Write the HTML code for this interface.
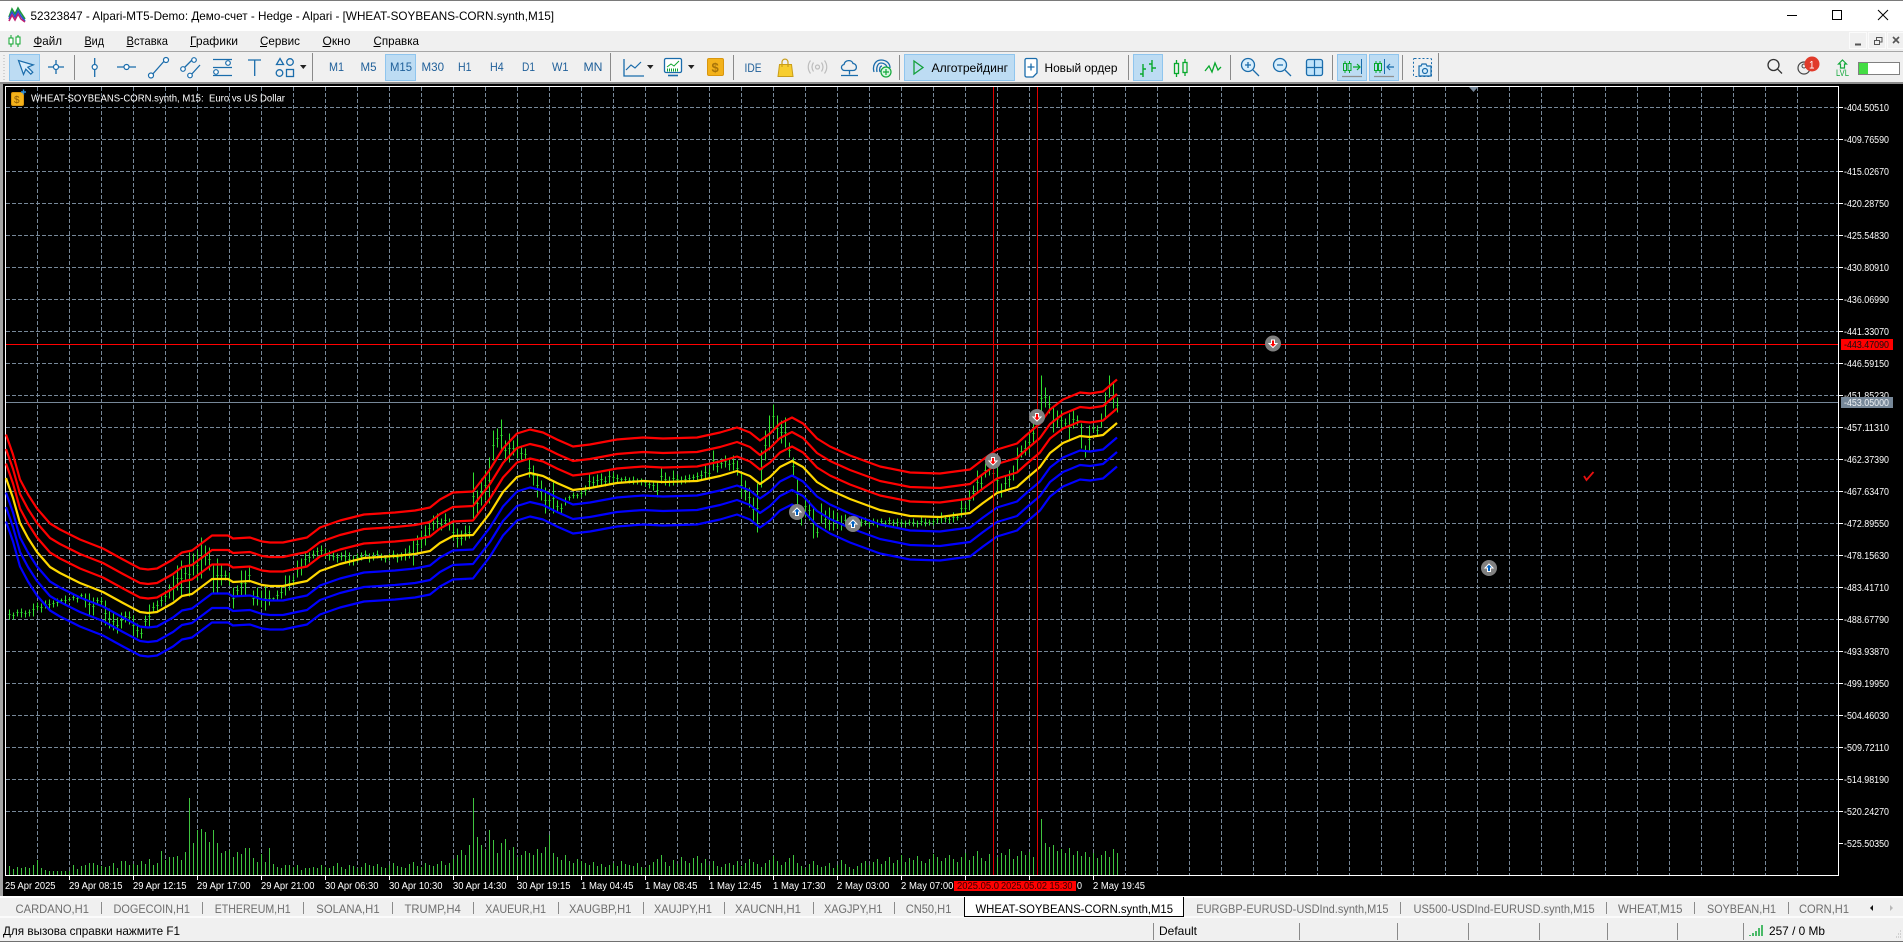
<!DOCTYPE html>
<html lang="ru">
<head>
<meta charset="utf-8">
<title>52323847 - Alpari-MT5-Demo</title>
<style>
html,body{margin:0;padding:0;background:#f0f0f0;overflow:hidden;width:1903px;height:942px}
svg{display:block}
text{font-family:"Liberation Sans","Noto Sans CJK SC",sans-serif;white-space:pre}
.m{font-size:12px;fill:#000}
.t{font-size:12px;fill:#1f5f99}
.tab{font-size:12px;fill:#6e6e6e}
.p{font-size:10px;fill:#fff}
.ic{fill:none;stroke:#1a6cab;stroke-width:1.3}
.cd{fill:#fff;stroke:#1a6cab;stroke-width:1.2}
.sep{stroke:#8a8a8a;stroke-width:1;shape-rendering:crispEdges}
.btn{fill:#bddcf3;stroke:#8fc5ee;stroke-width:1;shape-rendering:crispEdges}
.g{fill:none;stroke:#08a82c;stroke-width:1.3}
</style>
</head>
<body>
<svg xmlns="http://www.w3.org/2000/svg" width="1903" height="942" viewBox="0 0 1903 942">
<!-- title bar -->
<rect x="0" y="0" width="1903" height="31" fill="#fff"/>
<rect x="0" y="0" width="1903" height="1" fill="#7a7a7a"/>
<path d="M9 17l3-8 3 5 3-6 3 5 4 6" fill="none" stroke="#1f9a3a" stroke-width="1.6"/>
<path d="M9 19l3-7 3 5 3-6 3 5 4 5" fill="none" stroke="#2a4fd0" stroke-width="1.6"/>
<path d="M9 21l3-6 3 5 3-6 3 5 4 3" fill="none" stroke="#c02070" stroke-width="1.6"/>
<text x="30.5" y="20" class="m" textLength="523.5" lengthAdjust="spacingAndGlyphs">52323847 - Alpari-MT5-Demo: Демо-счет - Hedge - Alpari - [WHEAT-SOYBEANS-CORN.synth,M15]</text>
<path d="M1787 15.5h10" stroke="#000" shape-rendering="crispEdges"/>
<rect x="1832.5" y="10.5" width="9" height="9" fill="none" stroke="#000" shape-rendering="crispEdges"/>
<path d="M1878 10l10 10m0-10l-10 10" stroke="#000" fill="none"/>

<!-- menu bar -->
<rect x="0" y="31" width="1903" height="21" fill="#f0f0f0"/>
<path d="M11 35v12M18 35v12" stroke="#0da52c"/>
<rect x="9" y="38" width="4" height="6" fill="#fff" stroke="#0da52c"/>
<rect x="16" y="37" width="4" height="7" fill="#fff" stroke="#0da52c"/>
<text x="33.5" y="45" class="m" textLength="28.5" lengthAdjust="spacingAndGlyphs">Файл</text>
<text x="84.5" y="45" class="m" textLength="19.5" lengthAdjust="spacingAndGlyphs">Вид</text>
<text x="126.5" y="45" class="m" textLength="41.5" lengthAdjust="spacingAndGlyphs">Вставка</text>
<text x="190" y="45" class="m" textLength="48" lengthAdjust="spacingAndGlyphs">Графики</text>
<text x="260" y="45" class="m" textLength="40" lengthAdjust="spacingAndGlyphs">Сервис</text>
<text x="322.5" y="45" class="m" textLength="28" lengthAdjust="spacingAndGlyphs">Окно</text>
<text x="373.5" y="45" class="m" textLength="45.5" lengthAdjust="spacingAndGlyphs">Справка</text>
<path d="M33.5 46.5h8M84.5 46.5h7M126.5 46.5h7M190 46.5h6M260 46.5h7M322.5 46.5h8M373.5 46.5h7" stroke="#000" shape-rendering="crispEdges"/>
<!-- mdi buttons -->
<g fill="#f0f0f0" stroke="#fbfbfb" shape-rendering="crispEdges">
<rect x="1849.5" y="32.5" width="17" height="16"/><rect x="1868.5" y="32.5" width="17" height="16"/><rect x="1887.5" y="32.5" width="16" height="16"/>
</g>
<path d="M1855 44.5h6" stroke="#555" stroke-width="2"/>
<rect x="1874.5" y="40.5" width="5" height="4" fill="none" stroke="#555"/><path d="M1876.5 40v-2.500h5.500v4.500h-2" fill="none" stroke="#555"/>
<path d="M1893 37l6 6m0-6l-6 6" stroke="#555" stroke-width="1.6"/>

<!-- toolbar -->
<rect x="0" y="52" width="1903" height="31" fill="#f0f0f0"/>
<rect x="0" y="51" width="1903" height="1" fill="#a6a6a6"/>
<rect x="0" y="82" width="1903" height="2" fill="#8c8c8c"/>
<path d="M4 55v25" stroke="#b5b5b5" stroke-dasharray="1 2"/>
<rect x="9.500" y="54.500" width="30" height="26" class="btn"/>
<path d="M18.500 60.500l5 14 2.300-5.300 5 5 2-2-5-5 5.500-2.300z" fill="#d7ecfb" stroke="#1a6cab" stroke-width="1.2"/>
<path class="ic" d="M48 67h16M56 60v14"/><circle cx="56" cy="67" r="2.500" class="cd"/>
<path class="sep" d="M74.500 55v25"/>
<path class="ic" d="M94.700 58v19"/><circle cx="94.700" cy="67" r="2.500" class="cd"/>
<path class="ic" d="M117 67h19"/><circle cx="126.500" cy="67" r="2.500" class="cd"/>
<path class="ic" d="M151 76l15-17"/><circle cx="151" cy="75.500" r="2.500" class="cd"/><circle cx="166" cy="60" r="2.500" class="cd"/>
<path class="ic" d="M183 69l10-10M190 76l10-11"/><circle cx="183" cy="69" r="2.300" class="cd"/><circle cx="194" cy="60" r="2.300" class="cd"/><circle cx="190" cy="75.500" r="2.300" class="cd"/>
<path class="ic" d="M213 59.500h19M213 67.500h19M213 75.500h19"/><circle cx="228" cy="63" r="2.300" class="cd"/><circle cx="216" cy="72" r="2.300" class="cd"/>
<path class="ic" d="M248 60h13M254.700 60v16"/>
<path class="ic" d="M280 58.500l3.500 6h-7z"/><circle cx="290" cy="62" r="3.300" class="ic"/><circle cx="279.500" cy="73" r="3.300" class="ic"/><rect x="286.500" y="69.500" width="7" height="7" class="ic"/>
<path d="M300 65h6.500l-3.200 4z" fill="#222"/>
<path class="sep" d="M312.500 53v28"/>
<rect x="385.500" y="54.500" width="30" height="26" class="btn"/>
<text x="329" y="71" class="t" textLength="15" lengthAdjust="spacingAndGlyphs">M1</text>
<text x="360.500" y="71" class="t" textLength="16" lengthAdjust="spacingAndGlyphs">M5</text>
<text x="390" y="71" class="t" textLength="22" lengthAdjust="spacingAndGlyphs">M15</text>
<text x="421.500" y="71" class="t" textLength="22.500" lengthAdjust="spacingAndGlyphs">M30</text>
<text x="458" y="71" class="t" textLength="13.500" lengthAdjust="spacingAndGlyphs">H1</text>
<text x="490" y="71" class="t" textLength="13.700" lengthAdjust="spacingAndGlyphs">H4</text>
<text x="522" y="71" class="t" textLength="13" lengthAdjust="spacingAndGlyphs">D1</text>
<text x="552" y="71" class="t" textLength="16.500" lengthAdjust="spacingAndGlyphs">W1</text>
<text x="583.500" y="71" class="t" textLength="19" lengthAdjust="spacingAndGlyphs">MN</text>
<path class="sep" d="M610.500 53v28"/>
<path class="ic" d="M624 59v17h20"/><path d="M626 70l5-5 4 3 6-6" fill="none" stroke="#1a6cab" stroke-width="1.200"/>
<path d="M647 65h6.500l-3.200 4z" fill="#222"/>
<rect x="664.500" y="58.500" width="17" height="14" rx="1.500" fill="#fff" stroke="#1a6cab" stroke-width="1.300"/>
<path d="M667 67l4-3 3 2 5-5" fill="none" stroke="#0da52c"/><path d="M667 70h1m1 0h1m1 0h1m1 0h1m1 0h1m1 0h1" stroke="#0da52c" stroke-width="3" fill="none"/>
<path d="M668 75.500h10" stroke="#1a6cab" stroke-width="1.600"/>
<path d="M688 65h6.500l-3.200 4z" fill="#222"/>
<rect x="707.500" y="58.500" width="16" height="17" rx="1.500" fill="#f3b21b" stroke="#d9960e"/>
<text x="711.500" y="72" font-size="13" font-weight="bold" fill="#a8740a">$</text>
<path class="sep" d="M733.500 55v25"/>
<text x="744.500" y="72" font-size="12" fill="#1f5f99" textLength="17" lengthAdjust="spacingAndGlyphs">IDE</text>
<path d="M779.500 64.500h12l1.500 12h-15z" fill="#f7cd2e" stroke="#c99d1a"/><path d="M782 67v-4.500c0-4.500 6-4.500 6 0v4.500" fill="none" stroke="#c99d1a" stroke-width="1.200"/>
<g fill="none" stroke="#bdbdbd" stroke-width="1.200"><circle cx="817.500" cy="67" r="2"/><path d="M813.500 62.500c-2 3-2 6 0 9M821.500 62.500c2 3 2 6 0 9M810.500 60.500c-3 4-3 9 0 13M824.500 60.500c3 4 3 9 0 13"/></g>
<path class="ic" d="M845 70.500c-4 0-5-5-1-6 1-5 8-5 9-1 4 0 5 7 0 7zM849.500 70.500v4M841 75.500h17"/>
<g class="ic"><path d="M874 72c-2-7 2-12 7-12s9 3 9 8"/><path d="M877 72c-1-5 1-9 4-9s6 2 6 5"/><path d="M880 72c-1-3 0-6 2-6"/></g>
<circle cx="886" cy="72" r="5" fill="#d6f7e0" stroke="#12a83a" stroke-width="1.200"/><path d="M883 72h6M886 69v6" stroke="#12a83a" stroke-width="1.200"/>
<path class="sep" d="M899.500 55v25"/>
<rect x="904.500" y="54.500" width="110" height="26" class="btn"/>
<path d="M914 61l9 6.500-9 6.500z" fill="none" stroke="#12a03a" stroke-width="1.300"/>
<text x="931.500" y="72" class="m" textLength="76.500" lengthAdjust="spacingAndGlyphs">Алготрейдинг</text>
<path d="M1026.500 58.500h9a1.500 1.500 0 0 1 1.500 1.500v13l-4 4h-6.500a1.500 1.500 0 0 1-1.500-1.500v-15.500a1.500 1.500 0 0 1 1.500-1.500z" fill="#fff" stroke="#1a6cab" stroke-width="1.300"/><path d="M1027.500 67h7M1031 63.500v7" stroke="#1a6cab" stroke-width="1.300"/>
<text x="1044.500" y="72" class="m" textLength="73" lengthAdjust="spacingAndGlyphs">Новый ордер</text>
<path class="sep" d="M1128.500 55v25"/>
<rect x="1133.500" y="54.500" width="29" height="26" class="btn"/>
<path d="M1143 64v13M1140 74h3M1143 69h3M1152 60v12M1149 64h3M1152 68h4" stroke="#08a82c" stroke-width="1.400" fill="none"/>
<path class="g" d="M1176.500 60v17M1185 59v17"/><rect x="1174.500" y="63.500" width="4" height="10" fill="#f0f0f0" stroke="#08a82c" stroke-width="1.300"/><rect x="1183" y="62.500" width="4" height="10" fill="#f0f0f0" stroke="#08a82c" stroke-width="1.300"/>
<path class="g" d="M1205 71l4-5 3 6 3-9 3 7 3-3"/>
<path class="sep" d="M1230.500 55v25"/>
<circle cx="1248" cy="65" r="6.500" fill="#d8eefc" stroke="#1a6cab" stroke-width="1.300"/><path d="M1245 65h6M1248 62v6M1253 70l6 6" stroke="#1a6cab" stroke-width="1.300"/>
<circle cx="1280" cy="65" r="6.500" fill="#d8eefc" stroke="#1a6cab" stroke-width="1.300"/><path d="M1277 65h6M1285 70l6 6" stroke="#1a6cab" stroke-width="1.300"/>
<rect x="1306.500" y="59.500" width="16" height="16" rx="2" fill="#bfe3fa" stroke="#1a6cab" stroke-width="1.300"/><path d="M1314.500 60v15M1307 67.500h15" stroke="#1a6cab" stroke-width="1.200"/>
<path class="sep" d="M1332.500 55v25"/>
<rect x="1337.500" y="54.500" width="29" height="26" class="btn"/>
<rect x="1369.500" y="54.500" width="29" height="26" class="btn"/>
<path d="M1342 76.500h20M1374 76.500h20" stroke="#909090" stroke-width="1.300"/>
<path d="M1345 61v12M1349.500 61v12" stroke="#08a82c"/><rect x="1343.500" y="63.500" width="3" height="7" fill="#bddcf3" stroke="#08a82c"/><rect x="1348" y="63.500" width="3" height="7" fill="#bddcf3" stroke="#08a82c"/>
<path d="M1353 67h7M1357 64l3 3-3 3" fill="none" stroke="#08a82c" stroke-width="1.200"/><path d="M1361.500 59v15" stroke="#1a6cab"/>
<path d="M1376 61v12M1380 61v12" stroke="#08a82c"/><rect x="1374.500" y="63.500" width="3" height="7" fill="#bddcf3" stroke="#08a82c"/><rect x="1378.500" y="63.500" width="3" height="7" fill="#bddcf3" stroke="#08a82c"/>
<path d="M1384.500 59v15" stroke="#1a6cab"/><path d="M1394 67h-7M1390 64l-3 3 3 3" fill="none" stroke="#1a6cab" stroke-width="1.200"/>
<path class="sep" d="M1402.500 55v25"/>
<rect x="1413.500" y="58.500" width="18" height="18" fill="none" stroke="#1a6cab" stroke-dasharray="2 2" rx="1"/>
<path d="M1419 66h2l1-2h4l1 2h4v10h-12z" fill="#d8eefc" stroke="#1a6cab" stroke-width="1.200"/><circle cx="1425" cy="71" r="2.500" fill="none" stroke="#1a6cab" stroke-width="1.200"/>
<path class="sep" d="M1438.500 53v28"/>
<circle cx="1773.500" cy="65" r="5.500" fill="none" stroke="#333" stroke-width="1.300"/><path d="M1777.500 69l4.500 4.500" stroke="#333" stroke-width="1.300"/>
<circle cx="1804" cy="68" r="6" fill="none" stroke="#444" stroke-width="1.200"/><circle cx="1804" cy="66" r="2" fill="none" stroke="#444"/>
<circle cx="1812" cy="64" r="7.500" fill="#e13b2b"/>
<text x="1809" y="68.500" font-size="11" fill="#fff" textLength="5.500" lengthAdjust="spacingAndGlyphs">1</text>
<path d="M1842.500 60l4 4h-2v4h-4v-4h-2z" fill="none" stroke="#12a83a" stroke-width="1.200"/>
<text x="1836" y="76" font-size="9" fill="#12a83a" textLength="13" lengthAdjust="spacingAndGlyphs">LVL</text>
<rect x="1858.500" y="62.500" width="41" height="12" fill="#fff" stroke="#808080" shape-rendering="crispEdges"/>
<rect x="1859" y="63" width="9" height="11" fill="#44dd44"/>

<!-- chart background -->
<rect x="0" y="84" width="1903" height="813" fill="#000"/>
<rect x="0" y="84" width="3" height="813" fill="#a4a4a4"/>
<!-- grid -->
<path fill="none" stroke="#778899" stroke-dasharray="4 2" shape-rendering="crispEdges" d="M37.500 87v788m32-788v788m32-788v788m32-788v788m32-788v788m32-788v788m32-788v788m32-788v788m32-788v788m32-788v788m32-788v788m32-788v788m32-788v788m32-788v788m32-788v788m32-788v788m32-788v788m32-788v788m32-788v788m32-788v788m32-788v788m32-788v788m32-788v788m32-788v788m32-788v788m32-788v788m32-788v788m32-788v788m32-788v788m32-788v788m32-788v788m32-788v788m32-788v788m32-788v788m32-788v788m32-788v788m32-788v788m32-788v788m32-788v788m32-788v788m32-788v788m32-788v788m32-788v788m32-788v788m32-788v788m32-788v788m32-788v788m32-788v788m32-788v788m32-788v788m32-788v788m32-788v788m32-788v788m32-788v788m32-788v788m32-788v788"/>
<path fill="none" stroke="#778899" stroke-dasharray="4 2" shape-rendering="crispEdges" d="M6 107.500h1832m-1832 32h1832m-1832 32h1832m-1832 32h1832m-1832 32h1832m-1832 32h1832m-1832 32h1832m-1832 32h1832m-1832 32h1832m-1832 32h1832m-1832 32h1832m-1832 32h1832m-1832 32h1832m-1832 32h1832m-1832 32h1832m-1832 32h1832m-1832 32h1832m-1832 32h1832m-1832 32h1832m-1832 32h1832m-1832 32h1832m-1832 32h1832m-1832 32h1832"/>
<!-- frame -->
<rect x="5.500" y="86.500" width="1833" height="789" fill="none" stroke="#fff" shape-rendering="crispEdges"/>
<path d="M1469 87h9l-4.500 5z" fill="#778899"/>
<!-- price lines -->
<path d="M6 344.500h1832" stroke="#ff0000" shape-rendering="crispEdges"/>
<path d="M6 402.500h1832" stroke="#778899" shape-rendering="crispEdges"/>
<!-- volumes -->
<path fill="none" stroke="#3fc43f" shape-rendering="crispEdges" transform="translate(.5 0)" d="M9 875v-9m4 9v-6m4 6v-8m4 8v-7m4 7v-8m4 8v-7m4 7v-10m4 10v-15m4 15v-7m4 7v-5m4 5v-4m4 4v-4m4 4v-4m4 4v-4m4 4v-4m4 4v-4m4 4v-10m4 10v-6m4 6v-9m4 9v-10m4 10v-12m4 12v-12m4 12v-10m4 10v-9m4 9v-8m4 8v-9m4 9v-12m4 12v-7m4 7v-14m4 14v-14m4 14v-10m4 10v-11m4 11v-10m4 10v-14m4 14v-11m4 11v-16m4 16v-10m4 10v-12m4 12v-24m4 24v-15m4 15v-18m4 18v-18m4 18v-19m4 19v-15m4 15v-23m4 23v-77m4 77v-32m4 32v-45m4 45v-46m4 46v-43m4 43v-33m4 33v-45m4 45v-32m4 32v-22m4 22v-24m4 24v-25m4 25v-18m4 18v-23m4 23v-21m4 21v-27m4 27v-27m4 27v-17m4 17v-13m4 13v-21m4 21v-13m4 13v-27m4 27v-11m4 11v-8m4 8v-7m4 7v-10m4 10v-10m4 10v-8m4 8v-10m4 10v-5m4 5v-7m4 7v-7m4 7v-8m4 8v-7
m4 7v-10m4 10v-8m4 8v-7m4 7v-9m4 9v-12m4 12v-8m4 8v-6m4 6v-10m4 10v-9m4 9v-7m4 7v-8m4 8v-12m4 12v-10m4 10v-9m4 9v-11m4 11v-8m4 8v-7m4 7v-10m4 10v-12m4 12v-9m4 9v-8m4 8v-7m4 7v-11m4 11v-13m4 13v-9m4 9v-8m4 8v-12m4 12v-10m4 10v-9m4 9v-11m4 11v-14m4 14v-10m4 10v-12m4 12v-16m4 16v-20
m4 20v-25m4 25v-20m4 20v-30m4 30v-77m4 77v-38m4 38v-30m4 30v-25m4 25v-45m4 45v-35m4 35v-22m4 22v-32m4 32v-36m4 36v-25m4 25v-28m4 28v-18m4 18v-20m4 20v-24m4 24v-22m4 22v-20m4 20v-26m4 26v-22m4 22v-28m4 28v-40m4 40v-22m4 22v-18m4 18v-15m4 15v-20m4 20v-14m4 14v-12m4 12v-16m4 16v-14
m4 14v-12m4 12v-10m4 10v-13m4 13v-9m4 9v-11m4 11v-8m4 8v-10m4 10v-12m4 12v-9m4 9v-14m4 14v-11m4 11v-10m4 10v-9m4 9v-12m4 12v-8m4 8v-7m4 7v-10m4 10v-13
m4 13v-16m4 16v-20m4 20v-13m4 13v-9m4 9v-15m4 15v-11m4 11v-18m4 18v-14m4 14v-12m4 12v-17m4 17v-19m4 19v-12m4 12v-16m4 16v-10m4 10v-14m4 14v-9m4 9v-8m4 8v-11m4 11v-12
m4 12v-10m4 10v-14m4 14v-9m4 9v-12m4 12v-16m4 16v-13m4 13v-11m4 11v-8m4 8v-12m4 12v-15m4 15v-19m4 19v-14m4 14v-10m4 10v-13m4 13v-17m4 17v-20m4 20v-12m4 12v-9m4 9v-7m4 7v-11
m4 11v-14m4 14v-10m4 10v-8m4 8v-9m4 9v-12m4 12v-7m4 7v-10m4 10v-15m4 15v-11m4 11v-8m4 8v-6m4 6v-9m4 9v-12m4 12v-14m4 14v-10m4 10v-13m4 13v-16m4 16v-11m4 11v-14m4 14v-18m4 18v-12m4 12v-15m4 15v-20m4 20v-13m4 13v-17m4 17v-15m4 15v-19m4 19v-14m4 14v-12m4 12v-16m4 16v-21m4 21v-18
m4 18v-14m4 14v-17m4 17v-20m4 20v-16m4 16v-13m4 13v-18m4 18v-22m4 22v-15m4 15v-19m4 19v-24m4 24v-17m4 17v-14m4 14v-21m4 21v-25m4 25v-18m4 18v-22m4 22v-20m4 20v-26m4 26v-16m4 16v-19m4 19v-24
m4 24v-20m4 20v-23m4 23v-18m4 18v-25m4 25v-56m4 56v-32m4 32v-28m4 28v-30m4 30v-24m4 24v-26m4 26v-22m4 22v-27m4 27v-20m4 20v-24m4 24v-19m4 19v-23m4 23v-18m4 18v-22m4 22v-17m4 17v-20m4 20v-24m4 24v-18m4 18v-26m4 26v-22"/>
<!-- bars -->
<path fill="none" stroke="#2fe02f" shape-rendering="crispEdges" transform="translate(.5 .5)" d="M9 609v10m-1-5h2M13 612v7m-1-4h2M17 609v7m-1-4h2M21 608v9m-1-5h2M25 610v7m-1-4h2M29 609v7m-1-4h2M33 603v13m-1-7h2M37 602v8m-1-4h2M41 603v9m-1-5h2M45 600v8m-1-4h2M49 599v10m-1-5h2M53 600v7m-1-4h2M57 598v8m-1-4h2M61 598v5m-1-3h2M65 595v10m-1-5h2M69 597v4m-1-2h2M73 595v5m-1-3h2M77 595v7m-1-4h2M81 593v5m-1-3h2M85 593v14m-1-7h2M89 593v22m-1-11h2M93 597v18m-1-9h2M97 597v7m-1-4h2M101 597v8m-1-4h2M105 600v25m-1-12h2M109 608v20m-1-10h2M113 612v18m-1-9h2M117 617v16m-1-8h2M121 612v16m-1-8h2M125 611v11m-1-6h2M129 611v13m-1-7h2M133 615v20m-1-10h2M137 623v14m-1-7h2M141 628v10m-1-5h2M145 615v12m-1-6h2M149 604v23m-1-11h2M153 602v10m-1-5h2M157 600v10m-1-5h2M161 595v11m-1-6h2M165 590v12m-1-6h2M169 584v14m-1-7h2M173 575v25m-1-12h2M177 565v25m-1-12h2M181 560v35m-1-17h2M185 565v15m-1-7h2M189 552v44m-1-22h2M193 553v22m-1-11h2M197 550v30m-1-15h2M201 537v41m-1-20h2M205 545v20m-1-10h2M209 547v23m-1-11h2M213 563v29m-1-14h2M217 558v34m-1-17h2M221 565v20m-1-10h2M225 570v10m-1-5h2M229 572v13m-1-6h2M233 587v21m-1-10h2M237 585v10m-1-5h2M241 570v25m-1-12h2M245 570v25m-1-12h2M249 567v15m-1-7h2M253 590v15m-1-7h2M257 587v18m-1-9h2M261 590v17m-1-8h2M265 585v25m-1-12h2M269 590v15m-1-7h2M273 597v3m-1-2h2M277 590v10m-1-5h2M281 585v13m-1-6h2M285 575v20m-1-10h2M289 575v15m-1-7h2M293 575v10m-1-5h2M297 560v17m-1-8h2M301 558v17m-1-8h2M305 552v13m-1-6h2M309 552v10m-1-5h2M313 550v8m-1-4h2M317 547v9m-1-5h2M321 545v10m-1-5h2M325 548v10m-1-5h2M329 550v10m-1-5h2M333 552v8m-1-4h2M337 553v9m-1-5h2M341 552v8m-1-4h2M345 550v12m-1-6h2M349 552v13m-1-6h2M353 555v10m-1-5h2M357 553v9m-1-5h2M361 552v8m-1-4h2M365 550v8m-1-4h2M369 553v9m-1-5h2M373 552v8m-1-4h2M377 550v8m-1-4h2M381 553v7m-1-4h2M385 555v7m-1-4h2M389 553v7m-1-4h2M393 550v8m-1-4h2M397 553v9m-1-5h2M401 552v8m-1-4h2M405 548v12m-1-6h2M409 545v13m-1-6h2M413 540v25m-1-12h2M417 535v17m-1-8h2M421 530v18m-1-9h2M425 525v20m-1-10h2M429 520v15m-1-7h2M433 515v15m-1-7h2M437 513v15m-1-7h2M441 518v12m-1-6h2M445 513v13m-1-6h2M449 518v12m-1-6h2M453 523v17m-1-8h2M457 528v19m-1-9h2M461 530v15m-1-7h2M465 525v15m-1-7h2M469 525v13m-1-6h2M473 472v48m-1-24h2M477 490v25m-1-12h2M481 478v27m-1-13h2M485 470v30m-1-15h2M489 457v46m-1-23h2M493 430v30m-1-15h2M497 428v19m-1-9h2M501 419v31m-1-15h2M505 440v20m-1-10h2M509 433v29m-1-14h2M513 440v15m-1-7h2M517 438v20m-1-10h2M521 445v15m-1-7h2M525 448v12m-1-6h2M529 458v19m-1-9h2M533 465v20m-1-10h2M537 473v24m-1-12h2M541 480v20m-1-10h2M545 487v26m-1-13h2M549 490v20m-1-10h2M553 482v31m-1-15h2M557 500v12m-1-6h2M561 503v10m-1-5h2M565 497v8m-1-4h2M569 495v5m-1-3h2M573 492v6m-1-3h2M577 493v5m-1-3h2M581 490v7m-1-4h2M585 485v10m-1-5h2M589 472v18m-1-9h2M593 476v12m-1-6h2M597 474v12m-1-6h2M601 473v12m-1-6h2M605 476v10m-1-5h2M609 469v14m-1-7h2M613 472v10m-1-5h2M617 474v8m-1-4h2M621 477v5m-1-3h2M625 476v6m-1-3h2M629 477v6m-1-3h2M633 476v8m-1-4h2M637 478v6m-1-3h2M641 478v7m-1-4h2M645 479v7m-1-4h2M649 480v8m-1-4h2M653 481v9m-1-5h2M657 482v15m-1-7h2M661 468v15m-1-7h2M665 472v13m-1-6h2M669 476v10m-1-5h2M673 470v15m-1-7h2M677 474v10m-1-5h2M681 476v8m-1-4h2M685 475v8m-1-4h2M689 474v8m-1-4h2M693 474v6m-1-3h2M697 472v8m-1-4h2M701 470v10m-1-5h2M705 465v13m-1-6h2M709 468v10m-1-5h2M713 450v20m-1-10h2M717 460v12m-1-6h2M721 458v10m-1-5h2M725 455v12m-1-6h2M729 458v12m-1-6h2M733 455v15m-1-7h2M737 460v15m-1-7h2M741 473v24m-1-12h2M745 480v20m-1-10h2M749 487v20m-1-10h2M753 497v23m-1-11h2M757 483v49m-1-24h2M761 450v37m-1-18h2M765 430v30m-1-15h2M769 415v35m-1-17h2M773 404v24m-1-12h2M777 415v25m-1-12h2M781 420v23m-1-11h2M785 417v30m-1-15h2M789 442v15m-1-7h2M793 457v18m-1-9h2M797 478v32m-1-16h2M801 505v20m-1-10h2M805 495v22m-1-11h2M809 500v20m-1-10h2M813 507v31m-1-15h2M817 527v10m-1-5h2M821 503v20m-1-10h2M825 510v18m-1-9h2M829 507v23m-1-11h2M833 510v20m-1-10h2M837 512v16m-1-8h2M841 515v15m-1-7h2M845 514v12m-1-6h2M849 516v14m-1-7h2M853 516v12m-1-6h2M857 518v12m-1-6h2M861 518v8m-1-4h2M865 517v8m-1-4h2M869 519v8m-1-4h2M873 518v7m-1-4h2M877 519v8m-1-4h2M881 518v7m-1-4h2M885 520v7m-1-4h2M889 517v7m-1-4h2M893 519v7m-1-4h2M897 518v8m-1-4h2M901 519v7m-1-4h2M905 520v7m-1-4h2M909 519v6m-1-3h2M913 518v8m-1-4h2M917 520v7m-1-4h2M921 517v8m-1-4h2M925 518v8m-1-4h2M929 519v6m-1-3h2M933 518v7m-1-4h2M937 516v7m-1-4h2M941 512v11m-1-6h2M945 515v7m-1-4h2M949 516v7m-1-4h2M953 512v10m-1-5h2M957 514v6m-1-3h2M961 498v19m-1-9h2M965 503v10m-1-5h2M969 490v20m-1-10h2M973 485v15m-1-7h2M977 470v23m-1-11h2M981 475v15m-1-7h2M985 463v14m-1-7h2M989 463v12m-1-6h2M993 465v15m-1-7h2M997 467v26m-1-13h2M1001 483v14m-1-7h2M1005 475v15m-1-7h2M1009 470v17m-1-8h2M1013 465v15m-1-7h2M1017 447v23m-1-11h2M1021 445v12m-1-6h2M1025 440v15m-1-7h2M1029 430v23m-1-11h2M1033 423v20m-1-10h2M1037 410v15m-1-7h2M1041 375v45m-1-22h2M1045 387v20m-1-10h2M1049 395v18m-1-9h2M1053 407v25m-1-12h2M1057 410v17m-1-8h2M1061 410v20m-1-10h2M1065 418v10m-1-5h2M1069 413v27m-1-13h2M1073 410v18m-1-9h2M1077 415v10m-1-5h2M1081 423v25m-1-12h2M1085 445v12m-1-6h2M1089 425v27m-1-13h2M1093 425v7m-1-4h2M1097 425v10m-1-5h2M1101 413v14m-1-7h2M1105 392v26m-1-13h2M1109 375v22m-1-11h2M1113 383v25m-1-12h2M1117 397v15m-1-7h2"/>
<!-- envelope lines -->
<g fill="none" stroke-width="2.200" stroke-linejoin="round">
<path id="c" d="M6 478L13 498 20 523 28 538 37 552 50 567 60 573 80 583 103 592 123 603 140 612 148 613 157 612 173 603 182 596 192 594 200 588 212 579 220 579 228 579 233 582 250 581 262 585 270 586 283 586 297 583 307 581 320 571 340 564 364 558 395 556 415 554 430 551 440 543 453 536 473 535 490 513 503 492 517 477 530 473 543 476 557 483 573 490 590 488 617 483 643 481 663 482 697 481 720 476 737 471 750 476 760 484 770 477 780 467 792 461 803 467 817 482 830 490 850 499 880 510 910 516 940 517 970 513 983 503 997 493 1017 487 1027 478 1040 467 1050 453 1063 443 1080 436 1090 437 1103 435 1117 423"/>
<use href="#c" stroke="#ffd800"/>
<use href="#c" stroke="#ff0000" transform="translate(0 -14.500)"/>
<use href="#c" stroke="#ff0000" transform="translate(0 -29)"/>
<use href="#c" stroke="#ff0000" transform="translate(0 -43.500)"/>
<use href="#c" stroke="#0000ff" transform="translate(0 14.500)"/>
<use href="#c" stroke="#0000ff" transform="translate(0 29)"/>
<use href="#c" stroke="#0000ff" transform="translate(0 43.500)"/>
</g>
<!-- red verticals -->
<path d="M993.500 87v788M1037.500 87v788" stroke="#e00000" shape-rendering="crispEdges"/>
<!-- markers -->
<g transform="translate(993 461)"><circle r="8" fill="#808080"/><path d="M-1.500-3.500H1.500V0H4L0 4-4 0H-1.500z" fill="#f00" stroke="#fff"/></g>
<g transform="translate(1037 417)"><circle r="8" fill="#808080"/><path d="M-1.500-3.500H1.500V0H4L0 4-4 0H-1.500z" fill="#f00" stroke="#fff"/></g>
<g transform="translate(1273 343.500)"><circle r="8" fill="#808080"/><path d="M-1.500-3.500H1.500V0H4L0 4-4 0H-1.500z" fill="#f00" stroke="#fff"/></g>
<g transform="translate(797 512)"><circle r="8" fill="#808080"/><path d="M-1.500 3.500H1.500V0H4L0-4-4 0H-1.500z" fill="#0060c0" stroke="#fff"/></g>
<g transform="translate(853 524)"><circle r="8" fill="#808080"/><path d="M-1.500 3.500H1.500V0H4L0-4-4 0H-1.500z" fill="#0060c0" stroke="#fff"/></g>
<g transform="translate(1489 568)"><circle r="8" fill="#808080"/><path d="M-1.500 3.500H1.500V0H4L0-4-4 0H-1.500z" fill="#0060c0" stroke="#fff"/></g>
<path d="M1584 476l2.500 4 7-8" fill="none" stroke="#e81010" stroke-width="1.800"/>
<!-- chart label -->
<rect x="11.500" y="92.500" width="12" height="13" rx="1.500" fill="#f3b21b" stroke="#d9960e"/>
<text x="14" y="103" font-size="10" fill="#8a5a05">$</text>
<path d="M21 92h5M23.500 89.500v5" stroke="#2a8ad8" stroke-width="1.400"/>
<text x="31" y="101.500" font-size="10" fill="#fff" textLength="254" lengthAdjust="spacingAndGlyphs">WHEAT-SOYBEANS-CORN.synth, M15:  Euro vs US Dollar</text>
<!-- price scale -->
<path stroke="#fff" shape-rendering="crispEdges" d="M1839 107.500h4M1839 139.500h4M1839 171.500h4M1839 203.500h4M1839 235.500h4M1839 267.500h4M1839 299.500h4M1839 331.500h4M1839 363.500h4M1839 395.500h4M1839 427.500h4M1839 459.500h4M1839 491.500h4M1839 523.500h4M1839 555.500h4M1839 587.500h4M1839 619.500h4M1839 651.500h4M1839 683.500h4M1839 715.500h4M1839 747.500h4M1839 779.500h4M1839 811.500h4M1839 843.500h4"/>
<g class="p">
<text x="1844" y="111" class="p" textLength="45" lengthAdjust="spacingAndGlyphs">-404.50510</text>
<text x="1844" y="143" class="p" textLength="45" lengthAdjust="spacingAndGlyphs">-409.76590</text>
<text x="1844" y="175" class="p" textLength="45" lengthAdjust="spacingAndGlyphs">-415.02670</text>
<text x="1844" y="207" class="p" textLength="45" lengthAdjust="spacingAndGlyphs">-420.28750</text>
<text x="1844" y="239" class="p" textLength="45" lengthAdjust="spacingAndGlyphs">-425.54830</text>
<text x="1844" y="271" class="p" textLength="45" lengthAdjust="spacingAndGlyphs">-430.80910</text>
<text x="1844" y="303" class="p" textLength="45" lengthAdjust="spacingAndGlyphs">-436.06990</text>
<text x="1844" y="335" class="p" textLength="45" lengthAdjust="spacingAndGlyphs">-441.33070</text>
<text x="1844" y="367" class="p" textLength="45" lengthAdjust="spacingAndGlyphs">-446.59150</text>
<text x="1844" y="399" class="p" textLength="45" lengthAdjust="spacingAndGlyphs">-451.85230</text>
<text x="1844" y="431" class="p" textLength="45" lengthAdjust="spacingAndGlyphs">-457.11310</text>
<text x="1844" y="463" class="p" textLength="45" lengthAdjust="spacingAndGlyphs">-462.37390</text>
<text x="1844" y="495" class="p" textLength="45" lengthAdjust="spacingAndGlyphs">-467.63470</text>
<text x="1844" y="527" class="p" textLength="45" lengthAdjust="spacingAndGlyphs">-472.89550</text>
<text x="1844" y="559" class="p" textLength="45" lengthAdjust="spacingAndGlyphs">-478.15630</text>
<text x="1844" y="591" class="p" textLength="45" lengthAdjust="spacingAndGlyphs">-483.41710</text>
<text x="1844" y="623" class="p" textLength="45" lengthAdjust="spacingAndGlyphs">-488.67790</text>
<text x="1844" y="655" class="p" textLength="45" lengthAdjust="spacingAndGlyphs">-493.93870</text>
<text x="1844" y="687" class="p" textLength="45" lengthAdjust="spacingAndGlyphs">-499.19950</text>
<text x="1844" y="719" class="p" textLength="45" lengthAdjust="spacingAndGlyphs">-504.46030</text>
<text x="1844" y="751" class="p" textLength="45" lengthAdjust="spacingAndGlyphs">-509.72110</text>
<text x="1844" y="783" class="p" textLength="45" lengthAdjust="spacingAndGlyphs">-514.98190</text>
<text x="1844" y="815" class="p" textLength="45" lengthAdjust="spacingAndGlyphs">-520.24270</text>
<text x="1844" y="847" class="p" textLength="45" lengthAdjust="spacingAndGlyphs">-525.50350</text>
</g>
<rect x="1841" y="339" width="52" height="11" fill="#ff0000"/>
<text x="1844" y="348" font-size="10" fill="#111" textLength="45" lengthAdjust="spacingAndGlyphs">-443.47090</text>
<rect x="1841" y="397" width="52" height="11" fill="#778899"/>
<text x="1844" y="406" font-size="10" fill="#eef2f5" textLength="45" lengthAdjust="spacingAndGlyphs">-453.05000</text>
<!-- time scale -->
<path stroke="#fff" shape-rendering="crispEdges" d="M69.500 876v4M133.500 876v4M197.500 876v4M261.500 876v4M325.500 876v4M389.500 876v4M453.500 876v4M517.500 876v4M581.500 876v4M645.500 876v4M709.500 876v4M773.500 876v4M837.500 876v4M901.500 876v4M965.500 876v4M1029.500 876v4M1093.500 876v4"/>
<text x="5" y="889" class="p" textLength="50.500" lengthAdjust="spacingAndGlyphs">25 Apr 2025</text>
<text x="69" y="889" class="p" textLength="53.500" lengthAdjust="spacingAndGlyphs">29 Apr 08:15</text>
<text x="133" y="889" class="p" textLength="53.500" lengthAdjust="spacingAndGlyphs">29 Apr 12:15</text>
<text x="197" y="889" class="p" textLength="53.500" lengthAdjust="spacingAndGlyphs">29 Apr 17:00</text>
<text x="261" y="889" class="p" textLength="53.500" lengthAdjust="spacingAndGlyphs">29 Apr 21:00</text>
<text x="325" y="889" class="p" textLength="53.500" lengthAdjust="spacingAndGlyphs">30 Apr 06:30</text>
<text x="389" y="889" class="p" textLength="53.500" lengthAdjust="spacingAndGlyphs">30 Apr 10:30</text>
<text x="453" y="889" class="p" textLength="53.500" lengthAdjust="spacingAndGlyphs">30 Apr 14:30</text>
<text x="517" y="889" class="p" textLength="53.500" lengthAdjust="spacingAndGlyphs">30 Apr 19:15</text>
<text x="581" y="889" class="p" textLength="52.500" lengthAdjust="spacingAndGlyphs">1 May 04:45</text>
<text x="645" y="889" class="p" textLength="52.500" lengthAdjust="spacingAndGlyphs">1 May 08:45</text>
<text x="709" y="889" class="p" textLength="52.500" lengthAdjust="spacingAndGlyphs">1 May 12:45</text>
<text x="773" y="889" class="p" textLength="52.500" lengthAdjust="spacingAndGlyphs">1 May 17:30</text>
<text x="837" y="889" class="p" textLength="52.500" lengthAdjust="spacingAndGlyphs">2 May 03:00</text>
<text x="901" y="889" class="p" textLength="52.500" lengthAdjust="spacingAndGlyphs">2 May 07:00</text>
<rect x="954" y="881" width="122" height="10" fill="#ff0000"/>
<text x="957" y="889" font-size="10" fill="#300" textLength="42" lengthAdjust="spacingAndGlyphs">2025.05.0</text>
<text x="1001" y="889" font-size="10" fill="#300" textLength="71.500" lengthAdjust="spacingAndGlyphs">2025.05.02 15:30</text>
<text x="1077" y="889" class="p" textLength="5" lengthAdjust="spacingAndGlyphs">0</text>
<text x="1093" y="889" class="p" textLength="52" lengthAdjust="spacingAndGlyphs">2 May 19:45</text>

<!-- tab bar -->
<rect x="0" y="896" width="1903" height="22" fill="#f0f0f0"/>
<rect x="0" y="896" width="1903" height="2" fill="#fff"/>
<rect x="0" y="916" width="1903" height="2" fill="#fbfbfb"/>
<rect x="964.500" y="897.500" width="219" height="19" fill="#fff" stroke="#000" shape-rendering="crispEdges"/>
<rect x="965" y="896" width="218" height="2" fill="#fff"/>
<path class="sep" d="M101.500 902v12M202.500 902v12M303.500 902v12M392.500 902v12M473.500 902v12M558.500 902v12M643.500 902v12M724.500 902v12M813.500 902v12M894.500 902v12M1400.500 902v12M1606.500 902v12M1694.500 902v12M1788.500 902v12"/>
<text x="15.500" y="913" class="tab" textLength="73.500" lengthAdjust="spacingAndGlyphs">CARDANO,H1</text>
<text x="113.500" y="913" class="tab" textLength="76.500" lengthAdjust="spacingAndGlyphs">DOGECOIN,H1</text>
<text x="214.700" y="913" class="tab" textLength="76" lengthAdjust="spacingAndGlyphs">ETHEREUM,H1</text>
<text x="316.300" y="913" class="tab" textLength="63.300" lengthAdjust="spacingAndGlyphs">SOLANA,H1</text>
<text x="404.500" y="913" class="tab" textLength="56.300" lengthAdjust="spacingAndGlyphs">TRUMP,H4</text>
<text x="485.300" y="913" class="tab" textLength="60.700" lengthAdjust="spacingAndGlyphs">XAUEUR,H1</text>
<text x="569" y="913" class="tab" textLength="62.400" lengthAdjust="spacingAndGlyphs">XAUGBP,H1</text>
<text x="654" y="913" class="tab" textLength="58" lengthAdjust="spacingAndGlyphs">XAUJPY,H1</text>
<text x="735" y="913" class="tab" textLength="66" lengthAdjust="spacingAndGlyphs">XAUCNH,H1</text>
<text x="824" y="913" class="tab" textLength="58.400" lengthAdjust="spacingAndGlyphs">XAGJPY,H1</text>
<text x="905.700" y="913" class="tab" textLength="45.700" lengthAdjust="spacingAndGlyphs">CN50,H1</text>
<text x="975.500" y="913" class="m" textLength="197.500" lengthAdjust="spacingAndGlyphs">WHEAT-SOYBEANS-CORN.synth,M15</text>
<text x="1196.300" y="913" class="tab" textLength="192.200" lengthAdjust="spacingAndGlyphs">EURGBP-EURUSD-USDInd.synth,M15</text>
<text x="1413.500" y="913" class="tab" textLength="181.200" lengthAdjust="spacingAndGlyphs">US500-USDInd-EURUSD.synth,M15</text>
<text x="1618" y="913" class="tab" textLength="64.500" lengthAdjust="spacingAndGlyphs">WHEAT,M15</text>
<text x="1707" y="913" class="tab" textLength="69" lengthAdjust="spacingAndGlyphs">SOYBEAN,H1</text>
<text x="1799" y="913" class="tab" textLength="50" lengthAdjust="spacingAndGlyphs">CORN,H1</text>
<path d="M1873 905v6l-3-3z" fill="#111"/><path d="M1890 905v6l3-3z" fill="#b8b8b8"/>

<!-- status bar -->
<rect x="0" y="918" width="1903" height="23" fill="#f0f0f0"/>
<rect x="0" y="941" width="1903" height="1" fill="#707070"/>
<text x="3" y="935" class="m" textLength="177" lengthAdjust="spacingAndGlyphs">Для вызова справки нажмите F1</text>
<path class="sep" d="M1153.500 923v17M1299.500 923v17M1397.500 923v17M1468.500 923v17M1539.500 923v17M1607.500 923v17M1677.500 923v17M1743.500 923v17"/>
<text x="1159" y="935" class="m" textLength="38" lengthAdjust="spacingAndGlyphs">Default</text>
<path d="M1750 936v-1M1753 936v-3M1756 936v-5M1759 936v-8M1762 936v-11" stroke="#12a83a" stroke-width="1.500" fill="none"/>
<text x="1769" y="935" class="m" textLength="56" lengthAdjust="spacingAndGlyphs">257 / 0 Mb</text>
<path d="M1900 931h1M1898 934h1M1900 934h1M1896 937h1M1898 937h1M1900 937h1" stroke="#b0b0b0" fill="none"/>
</svg>
</body>
</html>
